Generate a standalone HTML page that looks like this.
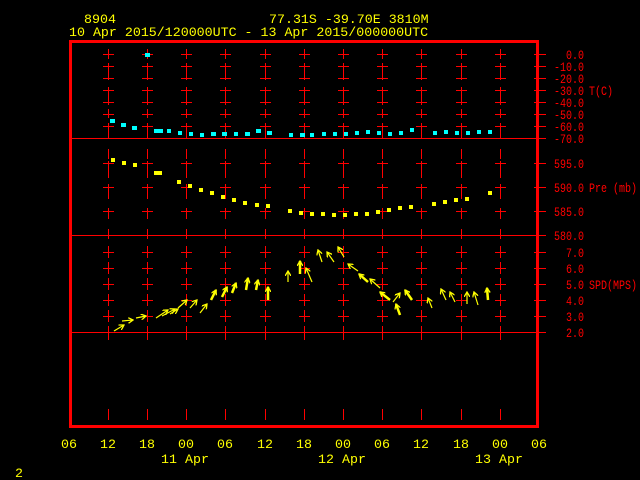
<!DOCTYPE html>
<html><head><style>
body{margin:0;background:#000;width:640px;height:480px;overflow:hidden}
svg{display:block}
text{font-family:"Liberation Mono",monospace}
</style></head><body>
<svg width="640" height="480" xmlns="http://www.w3.org/2000/svg">
<defs>
<g id="col" stroke="#ff0000" stroke-width="1" fill="none">
<path d="M0.5 49V59M0.5 63V80M0.5 87V105M0.5 109V118M0.5 123V138M0.5 149V159M0.5 161V178M0.5 184V199M0.5 208V219M0.5 229V239M0.5 246V258M0.5 262V274M0.5 278V290M0.5 294V306M0.5 310V322M0.5 326V340M0.5 409V420"/>
<path d="M-5 54.5H6M-5 66.5H6M-5 78.5H6M-5 90.5H6M-5 102.5H6M-5 114.5H6M-5 126.5H6M-5 163.5H6M-5 187.5H6M-5 211.5H6M-5 252.5H6M-5 268.5H6M-5 284.5H6M-5 300.5H6M-5 316.5H6"/>
</g>
<marker id="a" markerWidth="6" markerHeight="6" refX="5" refY="3" orient="auto" markerUnits="userSpaceOnUse"><path d="M0 0L5 3L0 6" fill="none" stroke="#ffff00" stroke-width="1.3"/></marker>
</defs>
<g fill="#ffff00" font-size="13.3">
<text x="84" y="23">8904</text>
<text x="269" y="23">77.31S  -39.70E  3810M</text>
<text x="69" y="36">10 Apr 2015/120000UTC - 13 Apr 2015/000000UTC</text>
</g>
<g fill="#ffff00" font-size="13.3" text-anchor="middle">
<text x="69" y="448">06</text><text x="108" y="448">12</text><text x="147" y="448">18</text><text x="186" y="448">00</text><text x="225" y="448">06</text><text x="265" y="448">12</text><text x="304" y="448">18</text><text x="343" y="448">00</text><text x="382" y="448">06</text><text x="421" y="448">12</text><text x="461" y="448">18</text><text x="500" y="448">00</text><text x="539" y="448">06</text>
<text x="185" y="463">11 Apr</text><text x="342" y="463">12 Apr</text><text x="499" y="463">13 Apr</text>
</g>
<text x="15" y="477" fill="#ffff00" font-size="13.3">2</text>
<g fill="#ff0000" font-size="12.5" lengthAdjust="spacingAndGlyphs">
<text x="566" y="59" textLength="18" lengthAdjust="spacingAndGlyphs">0.0</text>
<text x="554" y="71" textLength="30" lengthAdjust="spacingAndGlyphs">-10.0</text>
<text x="554" y="83" textLength="30" lengthAdjust="spacingAndGlyphs">-20.0</text>
<text x="554" y="95" textLength="30" lengthAdjust="spacingAndGlyphs">-30.0</text>
<text x="554" y="107" textLength="30" lengthAdjust="spacingAndGlyphs">-40.0</text>
<text x="554" y="119" textLength="30" lengthAdjust="spacingAndGlyphs">-50.0</text>
<text x="554" y="131" textLength="30" lengthAdjust="spacingAndGlyphs">-60.0</text>
<text x="554" y="143" textLength="30" lengthAdjust="spacingAndGlyphs">-70.0</text>
<text x="554" y="168" textLength="30" lengthAdjust="spacingAndGlyphs">595.0</text>
<text x="554" y="192" textLength="30" lengthAdjust="spacingAndGlyphs">590.0</text>
<text x="554" y="216" textLength="30" lengthAdjust="spacingAndGlyphs">585.0</text>
<text x="554" y="240" textLength="30" lengthAdjust="spacingAndGlyphs">580.0</text>
<text x="566" y="257" textLength="18" lengthAdjust="spacingAndGlyphs">7.0</text>
<text x="566" y="273" textLength="18" lengthAdjust="spacingAndGlyphs">6.0</text>
<text x="566" y="289" textLength="18" lengthAdjust="spacingAndGlyphs">5.0</text>
<text x="566" y="305" textLength="18" lengthAdjust="spacingAndGlyphs">4.0</text>
<text x="566" y="321" textLength="18" lengthAdjust="spacingAndGlyphs">3.0</text>
<text x="566" y="337" textLength="18" lengthAdjust="spacingAndGlyphs">2.0</text>
<text x="589" y="95" textLength="24" lengthAdjust="spacingAndGlyphs">T(C)</text>
<text x="589" y="192" textLength="48" lengthAdjust="spacingAndGlyphs">Pre (mb)</text>
<text x="589" y="289" textLength="48" lengthAdjust="spacingAndGlyphs">SPD(MPS)</text>
</g>
<g stroke="#ff0000" stroke-width="1" fill="none">
<line x1="70" y1="138.5" x2="539" y2="138.5"/>
<line x1="70" y1="235.5" x2="539" y2="235.5"/>
<line x1="70" y1="332.5" x2="539" y2="332.5"/>
</g>
<use href="#col" x="108"/><use href="#col" x="147"/><use href="#col" x="186"/><use href="#col" x="225"/><use href="#col" x="265"/><use href="#col" x="304"/><use href="#col" x="343"/><use href="#col" x="382"/><use href="#col" x="421"/><use href="#col" x="461"/><use href="#col" x="500"/>
<path d="M534 54.5H546M534 66.5H546M534 78.5H546M534 90.5H546M534 102.5H546M534 114.5H546M534 126.5H546M534 138.5H546M534 163.5H546M534 187.5H546M534 211.5H546M534 235.5H546M534 252.5H546M534 268.5H546M534 284.5H546M534 300.5H546M534 316.5H546M534 332.5H546" stroke="#ff0000"/>
<rect x="70.5" y="41.5" width="467" height="385" fill="none" stroke="#ff0000" stroke-width="3"/>
<g fill="#00ffff">
<rect x="145" y="53" width="5" height="4"/>
<rect x="110" y="119" width="5" height="4"/><rect x="121" y="123" width="5" height="4"/><rect x="132" y="126" width="5" height="4"/><rect x="154" y="129" width="9" height="4"/><rect x="167" y="129" width="4" height="4"/><rect x="178" y="131" width="4" height="4"/><rect x="189" y="132" width="4" height="4"/><rect x="200" y="133" width="4" height="4"/><rect x="211" y="132" width="5" height="4"/><rect x="222" y="132" width="5" height="4"/><rect x="234" y="132" width="4" height="4"/><rect x="245" y="132" width="5" height="4"/><rect x="256" y="129" width="5" height="4"/><rect x="267" y="131" width="5" height="4"/><rect x="289" y="133" width="4" height="4"/><rect x="300" y="133" width="5" height="4"/><rect x="310" y="133" width="4" height="4"/><rect x="322" y="132" width="4" height="4"/><rect x="333" y="132" width="4" height="4"/><rect x="344" y="132" width="4" height="4"/><rect x="355" y="131" width="4" height="4"/><rect x="366" y="130" width="4" height="4"/><rect x="377" y="131" width="4" height="4"/><rect x="388" y="132" width="4" height="4"/><rect x="399" y="131" width="4" height="4"/><rect x="410" y="128" width="4" height="4"/><rect x="433" y="131" width="4" height="4"/><rect x="444" y="130" width="4" height="4"/><rect x="455" y="131" width="4" height="4"/><rect x="466" y="131" width="4" height="4"/><rect x="477" y="130" width="4" height="4"/><rect x="488" y="130" width="4" height="4"/>
</g>
<g fill="#ffff00">
<rect x="111" y="158" width="4" height="4"/><rect x="122" y="161" width="4" height="4"/><rect x="133" y="163" width="4" height="4"/><rect x="154" y="171" width="8" height="4"/><rect x="177" y="180" width="4" height="4"/><rect x="188" y="184" width="4" height="4"/><rect x="199" y="188" width="4" height="4"/><rect x="210" y="191" width="4" height="4"/><rect x="221" y="195" width="4" height="4"/><rect x="232" y="198" width="4" height="4"/><rect x="243" y="201" width="4" height="4"/><rect x="255" y="203" width="4" height="4"/><rect x="266" y="204" width="4" height="4"/><rect x="288" y="209" width="4" height="4"/><rect x="299" y="211" width="4" height="4"/><rect x="310" y="212" width="4" height="4"/><rect x="321" y="212" width="4" height="4"/><rect x="332" y="213" width="4" height="4"/><rect x="343" y="213" width="4" height="4"/><rect x="354" y="212" width="4" height="4"/><rect x="365" y="212" width="4" height="4"/><rect x="376" y="210" width="4" height="4"/><rect x="387" y="208" width="4" height="4"/><rect x="398" y="206" width="4" height="4"/><rect x="409" y="205" width="4" height="4"/><rect x="432" y="202" width="4" height="4"/><rect x="443" y="200" width="4" height="4"/><rect x="454" y="198" width="4" height="4"/><rect x="465" y="197" width="4" height="4"/><rect x="488" y="191" width="4" height="4"/>
</g>
<g stroke="#ffff00" stroke-width="1.2" marker-end="url(#a)">
<line x1="114" y1="331" x2="124" y2="325"/><line x1="122" y1="321" x2="133" y2="320"/><line x1="136" y1="318" x2="146" y2="316"/>
<line x1="156" y1="318" x2="168" y2="310"/><line x1="162" y1="316" x2="175" y2="309"/><line x1="170" y1="314" x2="178" y2="309"/>
<line x1="178" y1="308" x2="187" y2="300"/><line x1="190" y1="308" x2="197" y2="300"/><line x1="200" y1="313" x2="207" y2="304"/>
<line x1="288" y1="282" x2="288" y2="271"/><line x1="312" y1="282" x2="306" y2="268"/><line x1="322" y1="262" x2="318" y2="250"/><line x1="334" y1="262" x2="327" y2="252"/><line x1="344" y1="257" x2="338" y2="247"/><line x1="358" y1="271" x2="348" y2="264"/><line x1="380" y1="288" x2="370" y2="279"/><line x1="393" y1="302" x2="400" y2="293"/>
<line x1="432" y1="308" x2="428" y2="298"/><line x1="446" y1="300" x2="441" y2="289"/><line x1="455" y1="302" x2="450" y2="292"/><line x1="467" y1="304" x2="467" y2="292"/><line x1="478" y1="305" x2="474" y2="292"/>
</g>
<g stroke="#ffff00" stroke-width="2.5" marker-end="url(#a)">
<line x1="211" y1="300" x2="216" y2="290"/><line x1="222" y1="297" x2="227" y2="287"/><line x1="232" y1="293" x2="236" y2="283"/><line x1="246" y1="290" x2="248" y2="278"/><line x1="256" y1="290" x2="258" y2="280"/><line x1="268" y1="300" x2="268" y2="287"/>
<line x1="300" y1="274" x2="300" y2="261"/><line x1="368" y1="282" x2="359" y2="274"/><line x1="390" y1="300" x2="380" y2="292"/><line x1="400" y1="315" x2="396" y2="304"/><line x1="412" y1="300" x2="405" y2="290"/><line x1="488" y1="300" x2="487" y2="288"/>
</g>
</svg>
</body></html>
